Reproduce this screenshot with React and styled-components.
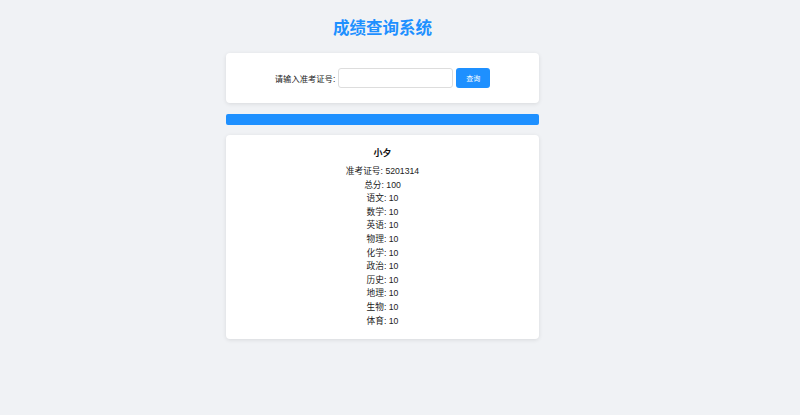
import React from "react";
import styled, { createGlobalStyle } from "styled-components";

const GlobalStyle = createGlobalStyle`
  body {
    margin: 0;
    background: #f0f2f5;
    font-family: "Liberation Sans", "Noto Sans CJK SC", sans-serif;
    color: #222;
  }
`;

const scores = [
  ["准考证号", "5201314"],
  ["总分", "100"],
  ["语文", "10"],
  ["数学", "10"],
  ["英语", "10"],
  ["物理", "10"],
  ["化学", "10"],
  ["政治", "10"],
  ["历史", "10"],
  ["地理", "10"],
  ["生物", "10"],
  ["体育", "10"],
];

function App() {
  return (
    <Page>
      <GlobalStyle />
      <Container>
        <Title>成绩查询系统</Title>
        <Card>
          <SearchRow>
            <Label htmlFor="ticket">请输入准考证号:</Label>
            <Input id="ticket" type="text" />
            <Button type="button">查询</Button>
          </SearchRow>
        </Card>
        <Progress>
          <ProgressFill style={{ width: "100%" }} />
        </Progress>
        <ResultCard>
          <Name>小夕</Name>
          {scores.map(([label, value]) => (
            <Line key={label}>
              {label}: {value}
            </Line>
          ))}
        </ResultCard>
      </Container>
    </Page>
  );
}

export default App;

const Page = styled.div`
  display: flex;
  justify-content: center;
  padding: 16px 35px 0 0;
  min-height: 415px;
  box-sizing: border-box;
`;

const Container = styled.div`
  width: 313px;
  display: flex;
  flex-direction: column;
`;

const Title = styled.h1`
  margin: 0 0 13px;
  text-align: center;
  font-size: 16.5px;
  line-height: 24px;
  font-weight: 700;
  color: #1e90ff;
`;

const Card = styled.div`
  background: #fff;
  border-radius: 4px;
  box-shadow: 0 1px 4px rgba(0, 0, 0, 0.1);
  padding: 15px 0;
`;

const SearchRow = styled.div`
  display: flex;
  justify-content: center;
  align-items: center;
  gap: 3px;
`;

const Label = styled.label`
  font-size: 8.3px;
  color: #222;
`;

const Input = styled.input`
  width: 115px;
  height: 20px;
  box-sizing: border-box;
  border: 1px solid #ddd;
  border-radius: 3px;
  padding: 0 5px;
  outline: none;
`;

const Button = styled.button`
  width: 34px;
  height: 20px;
  border: none;
  border-radius: 3px;
  background: #1e90ff;
  color: #fff;
  font-size: 7px;
  font-family: inherit;
  padding: 0;
  cursor: pointer;
`;

const Progress = styled.div`
  margin-top: 11px;
  height: 10.5px;
  border-radius: 2px;
  background: #e6e6e6;
  overflow: hidden;
`;

const ProgressFill = styled.div`
  height: 100%;
  background: #1e90ff;
`;

const ResultCard = styled(Card)`
  margin-top: 10.5px;
  padding: 12px 0 10.5px;
  text-align: center;
`;

const Name = styled.h3`
  margin: 0 0 6px;
  font-size: 9px;
  line-height: 12px;
  font-weight: 700;
  color: #111;
`;

const Line = styled.div`
  font-size: 8.7px;
  line-height: 13.6px;
  color: #222;
`;
